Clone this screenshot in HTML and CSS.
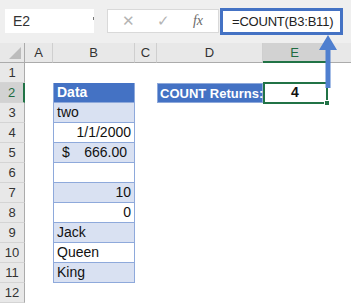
FILE: index.html
```html
<!DOCTYPE html>
<html>
<head>
<meta charset="utf-8">
<link rel="stylesheet" href="styles.css">
</head>
<body>
<div class="app">
  <div class="toolbar">
    <div class="namebox">E2<span class="drop"></span></div>
    <div class="btnbox">
      <span class="btn x">✕</span>
      <span class="btn ok">✓</span>
      <span class="btn fx">fx</span>
    </div>
    <div class="formula">=COUNT(B3:B11)</div>
  </div>
  <div class="sheet">
    <div class="ch corner"><span class="tri"></span></div>
    <div class="ch">A</div>
    <div class="ch">B</div>
    <div class="ch">C</div>
    <div class="ch">D</div>
    <div class="ch sel">E</div>
    <div class="ch last"></div>

    <div class="rh">1</div><div></div><div></div><div></div><div></div><div></div><div></div>

    <div class="rh sel">2</div><div></div><div class="tb head">Data</div><div></div><div class="lbl">COUNT Returns:</div><div class="res">4<span class="selbox"><span class="handle"></span></span></div><div></div>

    <div class="rh">3</div><div></div><div class="tb band">two</div><div></div><div></div><div></div><div></div>
    <div class="rh">4</div><div></div><div class="tb num">1/1/2000</div><div></div><div></div><div></div><div></div>
    <div class="rh">5</div><div></div><div class="tb band acc"><span>$</span><span>666.00</span></div><div></div><div></div><div></div><div></div>
    <div class="rh">6</div><div></div><div class="tb"></div><div></div><div></div><div></div><div></div>
    <div class="rh">7</div><div></div><div class="tb band num">10</div><div></div><div></div><div></div><div></div>
    <div class="rh">8</div><div></div><div class="tb num">0</div><div></div><div></div><div></div><div></div>
    <div class="rh">9</div><div></div><div class="tb band">Jack</div><div></div><div></div><div></div><div></div>
    <div class="rh">10</div><div></div><div class="tb">Queen</div><div></div><div></div><div></div><div></div>
    <div class="rh">11</div><div></div><div class="tb band">King</div><div></div><div></div><div></div><div></div>
    <div class="rh">12</div><div></div><div></div><div></div><div></div><div></div><div></div>
  </div>
  <svg class="arrow" width="20" height="56" viewBox="0 0 20 56">
    <polygon points="10,1 19,16 12.5,16 12.5,54 7.5,54 7.5,16 1,16" fill="#4f7fcf"/>
  </svg>
</div>
</body>
</html>
```

FILE: styles.css
```css
* { box-sizing: border-box; }
html, body { margin: 0; padding: 0; background: #fff; }
body { width: 351px; height: 304px; overflow: hidden; font-family: "Liberation Sans", Arial, sans-serif; }
.app { position: relative; width: 351px; height: 304px; }

.toolbar {
  height: 43px;
  background: #efefef;
  display: flex;
  align-items: flex-start;
  padding: 9px 0 0 5px;
}
.namebox {
  position: relative;
  width: 89px; height: 24px;
  background: #fff;
  font-size: 14px; color: #333;
  line-height: 24px;
  padding-left: 8px;
}
.drop {
  position: absolute; right: 0; top: 8px;
  width: 1px; height: 3px; background: #777;
}
.btnbox {
  margin-left: 13px;
  width: 112px; height: 24px;
  background: #fff;
  border: 1px solid #d9d9d9;
  display: grid;
  grid-template-columns: 40px 30px 1fr;
  align-items: center;
  justify-items: center;
}
.btn { color: #b4b4b4; font-size: 15px; line-height: 22px; }
.btn.x { font-size: 15px; }
.btn.fx { font-family: "Liberation Serif", serif; font-style: italic; color: #6a6a6a; font-size: 14px; }
.formula {
  margin-left: 1px; margin-top: -1px;
  width: 123px; height: 27px;
  background: #fff;
  border: 3px solid #4472c4;
  padding-left: 9px;
  font-size: 13px; line-height: 21px; color: #222;
  letter-spacing: -0.2px;
  white-space: nowrap;
}

.sheet {
  display: grid;
  grid-template-columns: 25px 28px 82px 22px 106px 64px 24px;
  grid-auto-rows: 20px;
  font-size: 14px;
}
.sheet > div { line-height: 19px; }
.ch {
  background: #e8e8e8;
  border-right: 1px solid #cfcfcf;
  border-bottom: 1px solid #ababab;
  text-align: center;
  font-size: 13px; color: #333;
}
.ch.last { border-right: none; }
.ch.sel { background: #d2d2d2; color: #1e6b41; border-bottom: 2px solid #217346; }
.corner { position: relative; border-right-color: #ababab; }
.tri {
  position: absolute; right: 3px; bottom: 3px;
  width: 0; height: 0;
  border-left: 12px solid transparent;
  border-bottom: 12px solid #bcbcbc;
}
.rh {
  background: #e8e8e8;
  border-right: 1px solid #ababab;
  border-bottom: 1px solid #d4d4d4;
  text-align: center;
  font-size: 13px; color: #333;
}
.rh.sel { background: #d2d2d2; color: #1e6b41; border-right: 2px solid #217346; }

.tb {
  border-left: 1px solid #8ea9db;
  border-right: 1px solid #8ea9db;
  border-bottom: 1px solid #8ea9db;
  padding: 0 3px;
  color: #111;
  white-space: nowrap;
}
.tb.band { background: #d9e1f2; }
.tb.head { background: #4472c4; color: #fff; font-weight: bold; }
.tb.num { text-align: right; }
.tb.acc { display: flex; justify-content: space-between; padding: 0 7px 0 8px; }

.lbl {
  background: #4472c4;
  border: 1px solid #8ea9db;
  color: #fff; font-weight: bold; font-size: 13px;
  padding-left: 2px;
  white-space: nowrap;
}
.res {
  position: relative;
  text-align: center;
  font-weight: bold;
  color: #111;
}
.selbox {
  position: absolute; left: 0; top: -1px; right: -1px; bottom: -1px;
  border: 2px solid #217346;
}
.handle {
  position: absolute; right: -4px; bottom: -4px;
  width: 6px; height: 6px;
  background: #217346;
  border: 1px solid #fff;
}
.arrow { position: absolute; left: 318px; top: 34px; }
```
